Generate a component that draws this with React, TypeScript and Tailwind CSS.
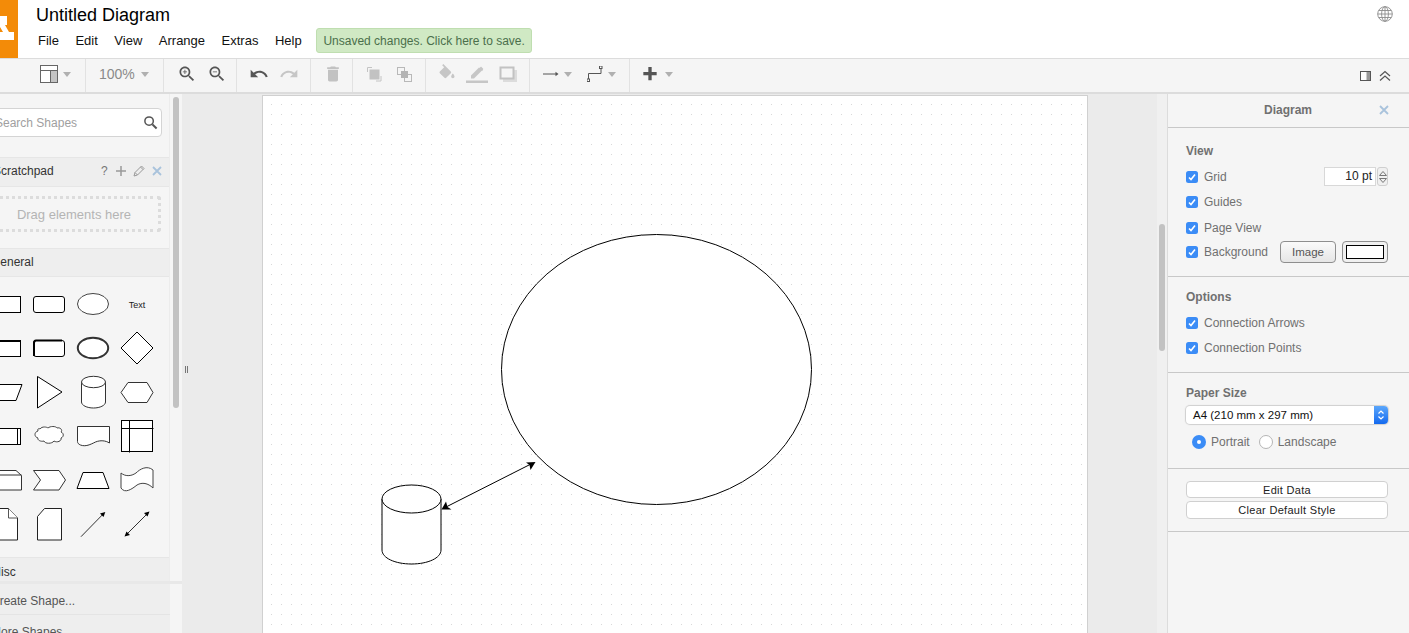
import type { ReactNode } from 'react'

const font = "font-['Liberation_Sans',Arial,sans-serif]"

const menus = ['File', 'Edit', 'View', 'Arrange', 'Extras', 'Help']

function Mat({ d, fill = '#555', className = '' }: { d: string; fill?: string; className?: string }) {
  return (
    <svg viewBox="0 0 24 24" className={`w-5 h-5 flex-shrink-0 ${className}`} fill={fill}>
      <path d={d} />
    </svg>
  )
}

function Caret({ className = '' }: { className?: string }) {
  return (
    <svg viewBox="0 0 8 5" className={`w-2 h-[5px] flex-shrink-0 ${className}`} fill="#b0b0b0">
      <path d="M0 0h8L4 5z" />
    </svg>
  )
}

function Group({ className, children }: { className: string; children: ReactNode }) {
  return <div className={`flex items-center h-full pb-[3px] border-r border-[#e2e2e2] flex-shrink-0 ${className}`}>{children}</div>
}

const zoomGlass = 'M15.5 14h-.79l-.28-.27C15.41 12.59 16 11.11 16 9.5 16 5.91 13.09 3 9.5 3S3 5.91 3 9.5 5.91 16 9.5 16c1.61 0 3.09-.59 4.23-1.57l.27.28v.79l5 4.99L20.49 19l-4.99-5zm-6 0C7.01 14 5 11.99 5 9.5S7.01 5 9.5 5 14 7.01 14 9.5 11.99 14 9.5 14z'

function Toolbar() {
  return (
    <div className="flex items-center h-[35px] bg-[#f5f5f5] border-b-2 border-[#dcdcdc]">
      <Group className="w-[86px] pl-[40px]">
        <svg viewBox="0 0 18 18" className="w-[18px] h-[18px]">
          <rect x="0.5" y="0.5" width="17" height="17" fill="#fff" stroke="#666" />
          <rect x="11" y="6" width="6" height="11" fill="#c4c4c4" />
          <path d="M1 5.5h16M10.5 6v11" stroke="#666" fill="none" />
        </svg>
        <Caret className="ml-[5px]" />
      </Group>
      <Group className="w-[78px] pl-[13px] text-[14px] text-[#8a8a8a]">
        <span className="w-[42px]">100%</span>
        <Caret />
      </Group>
      <Group className="w-[73px] pl-[13px] gap-[10px]">
        <Mat d={`${zoomGlass}M12 10h-2v2H9v-2H7V9h2V7h1v2h2v1z`} />
        <Mat d={`${zoomGlass}M7 9h5v1H7z`} />
      </Group>
      <Group className="w-[74px] pl-[12px] gap-[10px]">
        <Mat d="M12.5 8c-2.65 0-5.05.99-6.9 2.6L2 7v9h9l-3.62-3.62c1.39-1.16 3.16-1.88 5.12-1.88 3.54 0 6.55 2.31 7.6 5.5l2.37-.78C21.08 11.03 17.15 8 12.5 8z" />
        <Mat fill="#c6c6c6" d="M18.4 10.6C16.55 8.99 14.15 8 11.5 8c-4.65 0-8.58 3.03-9.96 7.22L3.9 16c1.05-3.19 4.05-5.5 7.6-5.5 1.95 0 3.73.72 5.12 1.88L13 16h9V7l-3.6 3.6z" />
      </Group>
      <Group className="w-[42px] pl-[12px]">
        <Mat fill="#c2c2c2" d="M6 19c0 1.1.9 2 2 2h8c1.1 0 2-.9 2-2V7H6v12zM19 4h-3.5l-1-1h-5l-1 1H5v2h14V4z" />
      </Group>
      <Group className="w-[73px] pl-[11px] gap-[10px]">
        <svg viewBox="0 0 20 20" className="w-5 h-5">
          <path d="M3.500 8V3.500H8M12 17h5v-5" fill="none" stroke="#c4c4c4" />
          <rect x="5.500" y="5.500" width="10" height="10" fill="#c2c2c2" />
        </svg>
        <svg viewBox="0 0 20 20" className="w-5 h-5">
          <rect x="3.500" y="3.500" width="7" height="7" fill="none" stroke="#b8b8b8" />
          <rect x="10.500" y="10.500" width="7" height="7" fill="none" stroke="#b8b8b8" />
          <rect x="7" y="7" width="7" height="7" fill="#b4b4b4" />
        </svg>
      </Group>
      <Group className="w-[104px] pl-[11px] gap-[10px]">
        <Mat fill="#c6c6c6" d="M16.56 8.94L7.62 0 6.21 1.41l2.38 2.38-5.15 5.15c-.59.59-.59 1.54 0 2.12l5.500 5.500c.29.29.68.44 1.06.44s.77-.15 1.06-.44l5.500-5.500c.59-.58.59-1.53 0-2.12zM19 11.500s-2 2.170-2 3.500c0 1.100.9 2 2 2s2-.9 2-2c0-1.330-2-3.500-2-3.500z" />
        <svg viewBox="0 0 22 22" className="w-[22px] h-[22px] -mx-[1px]" fill="#c6c6c6">
          <path d="M5 12.500V15.500h3l8-8L13 4.500zM17 6.500c.3-.3.3-.7 0-1L15.500 4c-.3-.3-.7-.3-1 0l-1 1 3 3z" />
          <rect x="0" y="17.500" width="22" height="2.500" />
        </svg>
        <svg viewBox="0 0 20 20" className="w-5 h-5 ml-[1px]">
          <rect x="5" y="6" width="14" height="12" fill="#dcdcdc" />
          <rect x="2.500" y="3.500" width="13" height="11" fill="#f5f5f5" stroke="#c2c2c2" strokeWidth="2" />
        </svg>
      </Group>
      <Group className="w-[100px] pl-[13px]">
        <svg viewBox="0 0 16 8" className="w-4 h-2">
          <path d="M0 4h13" stroke="#555" fill="none" />
          <path d="M12.500 1.800L15.500 4l-3 2.200z" fill="#555" />
        </svg>
        <Caret className="ml-[5px]" />
        <svg viewBox="0 0 16 16" className="w-4 h-4 ml-[15px]">
          <path d="M1.500 13V7.500h12.500V2" fill="none" stroke="#555" />
          <rect x="0" y="13" width="2.500" height="2.500" fill="#fff" stroke="#555" />
          <rect x="12.500" y="0" width="2.500" height="2.500" fill="#fff" stroke="#555" />
        </svg>
        <Caret className="ml-[5px]" />
      </Group>
      <div className="flex items-center h-full pb-[3px] pl-[10px]">
        <Mat d="M20 13.500h-6v6h-4v-6H4v-4h6v-6h4v6h6z" />
        <Caret className="ml-[5px]" />
      </div>
      <div className="ml-auto flex items-center gap-[7px] pr-[18px]">
        <svg viewBox="0 0 12 12" className="w-3 h-3">
          <rect x="0.500" y="1.500" width="10" height="9" fill="#fff" stroke="#555" />
          <rect x="6.500" y="2" width="3.500" height="8" fill="#999" />
        </svg>
        <svg viewBox="0 0 12 12" className="w-3 h-3" fill="none" stroke="#555" strokeWidth="1.200">
          <path d="M1 6l5-4.500L11 6M1 10.500L6 6l5 4.500" />
        </svg>
      </div>
    </div>
  )
}

function Header() {
  return (
    <header className="flex h-[59px] bg-white border-b border-[#dcdcdc]">
      <div className="w-[18px] bg-[#f38b08] flex-shrink-0">
        <svg viewBox="0 0 18 58" className="w-[18px] h-[58px]" fill="#fff">
          <path d="M0 16h7v9H5l4 7h5v8H0v-8h3l-3-5z" />
        </svg>
      </div>
      <div className="pl-[18px] flex-1">
        <div className="text-[18px] leading-[21px] mt-[5px] text-black">Untitled Diagram</div>
        <div className="flex items-center mt-[2px]">
          <nav className="flex text-[13px] gap-[16.5px] pl-[2px] text-[#111]">
            {menus.map((m) => <span key={m}>{m}</span>)}
          </nav>
          <div className="ml-[14.5px] h-[25px] w-[216px] flex items-center justify-center rounded-[3px] border border-[#bfdeb0] bg-[#d0e9c4] text-[12px] text-[#4b6f4b] whitespace-nowrap">
            Unsaved changes. Click here to save.
          </div>
        </div>
      </div>
      <svg viewBox="0 0 16 16" className="w-4 h-4 mt-[6px] mr-[16px]" fill="none" stroke="#8c8c8c" strokeWidth="0.900">
        <circle cx="8" cy="8" r="7.300" />
        <ellipse cx="8" cy="8" rx="3.400" ry="7.300" />
        <path d="M8 .7v14.600M.7 8h14.600M1.800 4.500h12.400M1.800 11.500h12.400" />
      </svg>
    </header>
  )
}

const stroke = { fill: '#fff', stroke: '#000', strokeWidth: 1 }

// palette cells: 44x44, shapes 32 wide around the centre
const shapes: ReactNode[] = [
  <rect x="6.500" y="14.500" width="31" height="16" {...stroke} />,
  <rect x="6.500" y="14.500" width="31" height="16" rx="2.500" {...stroke} />,
  <ellipse cx="22" cy="22" rx="15.500" ry="10.500" {...stroke} stroke="#444" />,
  <text x="22" y="26" textAnchor="middle" fontSize="9" fill="#222">Text</text>,

  <g><rect x="6.500" y="14.500" width="31" height="16" {...stroke} /><path d="M6.500 15h31" stroke="#000" strokeWidth="2" /></g>,
  <g>
    <rect x="6.500" y="14.500" width="31" height="16" rx="2.500" {...stroke} />
    <path d="M7 30V17c0-2 1-2.500 2-2.500h26" fill="none" stroke="#000" strokeWidth="2" />
  </g>,
  <ellipse cx="22" cy="22" rx="15.200" ry="10.200" {...stroke} stroke="#333" strokeWidth={2} />,
  <path d="M22 6l16 16-16 16L6 22z" {...stroke} />,

  <path d="M9 14.500h30L33 30.500H3z" {...stroke} />,
  <path d="M10.500 6.500l24.500 15.500-24.500 16z" {...stroke} />,
  <g>
    <path d="M10.500 12v20c0 3.300 5.400 6 12 6s12-2.700 12-6V12" {...stroke} stroke="#333" />
    <ellipse cx="22.500" cy="12" rx="12" ry="5.700" {...stroke} stroke="#333" />
  </g>,
  <path d="M13 12.500h19L38 22.500l-6 10H13l-7-10z" {...stroke} stroke="#333" />,

  <g><rect x="6.500" y="14.500" width="31" height="16" {...stroke} /><path d="M34.500 14.500v16" stroke="#000" /></g>,
  <path d="M13 15c2-3 7-2 8-1 2-2 8-2 9 0 3-1 6 2 4 4 3 1 3 5 0 6 1 3-4 5-7 3-2 3-9 3-10 0-3 1-7-1-6-3-4-1-4-6 0-7-1-2 1-3 2-2z" {...stroke} stroke="#444" />,
  <path d="M6.500 12.500h32v16.500c-4-2.500-9-3-14-1-5 2.500-10 5-15 3-2-.8-3-2-3-3.500z" {...stroke} stroke="#333" />,
  <g {...stroke}>
    <rect x="6.500" y="6.500" width="31" height="31" />
    <path d="M6.500 14.500h32M14.500 6.500v32" fill="none" />
  </g>,

  <g><path d="M0 12.500h33l5.500 5v14.500H0z" {...stroke} stroke="#333" /><path d="M0 17h38.500" fill="none" stroke="#333" /></g>,
  <path d="M6.500 12.500h25.500l6.500 9.500-6.500 10H6.500l7-10z" {...stroke} stroke="#333" />,
  <path d="M12 14.500h20l6 16H6z" {...stroke} />,
  <path d="M6 15C10 18.500 16 18.500 21 15 25 11 32 7 38 12V30C33 25 27 24 22 27 17 31 10 36 6 30z" {...stroke} stroke="#444" />,

  <g><path d="M0 6.500h25.500l9 9.500v22H0z" {...stroke} stroke="#222" /><path d="M25.500 6.500v9.500h9" {...stroke} stroke="#555" /></g>,
  <path d="M17.500 6.500h17v31.500h-24V14.500z" {...stroke} stroke="#222" />,
  <g><path d="M10 34.700l22-22.500" stroke="#000" fill="none" strokeWidth={0.800} /><path d="M34.300 10l-5.300 1.500 3.500 3.500z" fill="#000" /></g>,
  <g>
    <path d="M11 33l22-22" stroke="#000" fill="none" strokeWidth={0.800} />
    <path d="M34.500 9.500l-5.500 1.500 3.500 3.500zM9.500 34.500l5.500-1.500-3.500-3.500z" fill="#000" />
  </g>,
]

function Section({ children, className = '' }: { children: ReactNode; className?: string }) {
  return <div className={`h-[29px] flex items-center text-[12px] text-[#333] bg-[#eeeeee] border-y border-[#e6e6e6] ${className}`}>{children}</div>
}

function Sidebar() {
  return (
    <aside className="w-[190px] flex-shrink-0 flex bg-[#ebebeb] h-full">
      <div className="w-[182px] flex flex-col bg-[#f5f5f5] overflow-hidden">
        <div className="flex h-[487px] flex-shrink-0 overflow-hidden">
          <div className="w-[170px] flex-shrink-0 overflow-hidden border-r border-[#ececec]">
            <div className="w-[197px] -ml-[27px]">
              <div className="h-[63px] pt-[14px] pl-[14px] pr-[8px]">
                <div className="h-[29px] w-[175px] bg-white border border-[#d4d4d4] rounded-[4px] flex items-center justify-between pl-[7px] pr-[3px] text-[12px] text-[#a0a0a0]">
                  <span>Search Shapes</span>
                  <svg viewBox="0 0 16 16" className="w-[15px] h-[15px]" fill="none" stroke="#555" strokeWidth="1.600">
                    <circle cx="6.500" cy="6.500" r="4.500" />
                    <path d="M10 10l4.500 4.500" strokeWidth="2.200" />
                  </svg>
                </div>
              </div>
              <Section className="justify-between pl-[20px] pr-[8px] pb-[2px] h-[30px]">
                <span>Scratchpad</span>
                <span className="flex items-center gap-[6px] text-[#777]">
                  <span className="text-[12px] w-[8px]">?</span>
                  <svg viewBox="0 0 12 12" className="w-3 h-3" stroke="#999" strokeWidth="1.500"><path d="M6 1v10M1 6h10" /></svg>
                  <svg viewBox="0 0 12 12" className="w-3 h-3" fill="none" stroke="#999"><path d="M1 11l1-3.500L8.500 1 11 3.500 4.500 10zM7.500 2l2.500 2.500M2 7.500L4.500 10" /></svg>
                  <svg viewBox="0 0 10 10" className="w-[10px] h-[10px] ml-[1px]" stroke="#a9c3dc" strokeWidth="1.800"><path d="M1 1l8 8M9 1l-8 8" /></svg>
                </span>
              </Section>
              <div className="h-[61px] pt-[9px] pl-[14px]">
                <div className="h-[36px] w-[174px] pt-[1px] border-[3px] border-dotted border-[#dcdcdc] rounded-[3px] flex items-center justify-center text-[13px] text-[#b4b4b4]">
                  Drag elements here
                </div>
              </div>
              <Section className="pl-[18px] pb-[2px]">General</Section>
              <div className="grid grid-cols-[repeat(4,44px)] pt-[5px] pl-[10px] pb-[11px]">
                {shapes.map((s, i) => (
                  <svg key={i} viewBox="0 0 44 44" className="w-11 h-11">{s}</svg>
                ))}
              </div>
              <Section className="pl-[18px]">Misc</Section>
            </div>
          </div>
          <div className="w-[11px] flex-shrink-0 pl-[3px] pt-[3px]">
            <div className="w-[6px] h-[311px] rounded-[3px] bg-[#c2c2c2]" />
          </div>
        </div>
        <div className="flex-shrink-0 border-t-[3px] border-[#e8e8e8]">
          <div className="w-[197px] -ml-[27px]">
            <div className="h-[31px] pl-[18px] pt-[3px] flex items-center text-[12px] text-[#555] bg-[#eeeeee] border-b border-[#e4e4e4]">Create Shape...</div>
            <div className="h-[31px] pl-[18px] pt-[3px] flex items-center text-[12px] text-[#555] bg-[#eeeeee]">More Shapes</div>
          </div>
        </div>
      </div>
      <div className="w-2 h-full flex items-center justify-center">
        <div className="w-[3px] h-[7px] border-x border-[#777] translate-y-[6px]" />
      </div>
    </aside>
  )
}

function Canvas() {
  return (
    <main className="flex-1 flex overflow-hidden bg-[#ebebeb] h-full">
      <div className="flex-1 pl-[72px] pt-[1px] overflow-hidden">
        <div className="w-[826px] h-full bg-white border-x border-t border-[#d0d0d0]">
          <svg width="824" height="538" className="block">
            <defs>
              <pattern id="dots" x="8" y="8" width="10" height="10" patternUnits="userSpaceOnUse">
                <rect width="1" height="1" fill="#d8d8d8" />
              </pattern>
            </defs>
            <rect width="824" height="538" fill="url(#dots)" />
            <g transform="translate(-263 -96)" fill="#fff" stroke="#000" strokeWidth="1">
              <ellipse cx="656.500" cy="369.500" rx="155" ry="135" />
              <path d="M382 499v51c0 8 13 14 29.500 14s29.500-6 29.500-14v-51" />
              <ellipse cx="411.500" cy="499" rx="29.500" ry="14" />
              <path d="M447 506.500l83-42" fill="none" />
              <path d="M441.500 509.500l4.500-8 1.500 5.500 4 2.500z" fill="#000" stroke="none" />
              <path d="M535.500 462l-9.500.5 3.500 2.500 1 5z" fill="#000" stroke="none" />
            </g>
          </svg>
        </div>
      </div>
      <div className="w-[10px] flex-shrink-0 bg-[#f0f0f0] pl-[2px] pt-[130px]">
        <div className="w-[6px] h-[127px] rounded-[3px] bg-[#c2c2c2]" />
      </div>
    </main>
  )
}

function Check({ label, className = '' }: { label: string; className?: string }) {
  return (
    <label className={`flex items-center gap-[6px] h-[14px] leading-[14px] text-[12px] text-[#707070] ${className}`}>
      <span className="w-3 h-3 rounded-[2.500px] bg-[#3b8cf6] flex items-center justify-center">
        <svg viewBox="0 0 12 12" className="w-3 h-3" fill="none" stroke="#fff" strokeWidth="1.600"><path d="M3 6.500l2 2 4-5" /></svg>
      </span>
      {label}
    </label>
  )
}

function Heading({ children }: { children: ReactNode }) {
  return <div className="text-[12px] font-bold text-[#707070] leading-[14px]">{children}</div>
}

function Panel() {
  return (
    <aside className="w-[242px] flex-shrink-0 h-full bg-[#f5f5f5] border-l border-[#dcdcdc]">
      <div className="h-[34px] relative flex items-center justify-center border-b border-[#c8c8c8] text-[12px] font-bold text-[#707070] pr-[1px] pb-[2px]">
        Diagram
        <svg viewBox="0 0 10 10" className="absolute right-[20px] top-[11px] w-[10px] h-[10px]" stroke="#a9c3dc" strokeWidth="1.800"><path d="M1 1l8 8M9 1l-8 8" /></svg>
      </div>
      <div className="h-[149px] border-b border-[#c8c8c8] pl-[18px] pr-[21px] pt-[16px]">
        <Heading>View</Heading>
        <div className="flex items-center justify-between h-[19px] mt-[9px]">
          <Check label="Grid" />
          <div className="flex items-center gap-[1px]">
            <div className="w-[52px] h-[19px] bg-white border border-[#d8d8d8] text-[12px] text-[#222] text-right pr-[3px] leading-[17px]">10 pt</div>
            <div className="w-[11px] h-[19px] rounded-[3px] bg-[#f0f0f0] border border-[#cfcfcf] flex flex-col items-center justify-center gap-[2px]">
              <svg viewBox="0 0 8 5" className="w-2 h-[5px]" fill="none" stroke="#777"><path d="M.5 4.500L4 .5l3.500 4z" /></svg>
              <svg viewBox="0 0 8 5" className="w-2 h-[5px]" fill="none" stroke="#777"><path d="M.5.5l3.500 4 3.500-4z" /></svg>
            </div>
          </div>
        </div>
        <Check label="Guides" className="mt-[9px]" />
        <Check label="Page View" className="mt-[12px]" />
        <div className="flex items-center mt-[6px]">
          <Check label="Background" className="w-[94px]" />
          <div className="w-[56px] h-[22px] pt-[1px] rounded-[4px] border border-[#8e8e8e] bg-gradient-to-b from-[#fafafa] to-[#e6e6e6] flex items-center justify-center text-[11.500px] text-[#555]">Image</div>
          <div className="w-[46px] h-[22px] ml-[6px] rounded-[4px] border border-[#8e8e8e] bg-[#f0f0f0] flex items-center justify-center">
            <div className="w-[38px] h-[14px] bg-white border border-black" />
          </div>
        </div>
      </div>
      <div className="h-[96px] border-b border-[#c8c8c8] pl-[18px] pt-[13px]">
        <Heading>Options</Heading>
        <Check label="Connection Arrows" className="mt-[12px]" />
        <Check label="Connection Points" className="mt-[11px]" />
      </div>
      <div className="h-[96px] border-b border-[#c8c8c8] pl-[18px] pr-[21px] pt-[13px]">
        <Heading>Paper Size</Heading>
        <div className="mt-[6px] h-[18px] flex rounded-[4px] bg-white shadow-[0_0_1px_1px_#cfcfcf] overflow-hidden">
          <div className="flex-1 pl-[7px] text-[11.500px] leading-[18px] text-[#111]">A4 (210 mm x 297 mm)</div>
          <div className="w-[14px] bg-gradient-to-b from-[#5aa6fb] to-[#1269ee] flex items-center justify-center">
            <svg viewBox="0 0 8 12" className="w-2 h-3" fill="none" stroke="#fff" strokeWidth="1.200"><path d="M1.500 4.500L4 2l2.500 2.500M1.500 7.500L4 10l2.500-2.500" /></svg>
          </div>
        </div>
        <div className="flex items-center mt-[10px] pl-[6px] h-[16px] text-[12px] text-[#707070]">
          <span className="w-[14px] h-[14px] rounded-full bg-[#3b8cf6] flex items-center justify-center">
            <span className="w-1 h-1 rounded-full bg-white" />
          </span>
          <span className="ml-[5px]">Portrait</span>
          <span className="w-[14px] h-[14px] ml-[9px] rounded-full bg-white border border-[#b5b5b5]" />
          <span className="ml-[5px]">Landscape</span>
        </div>
      </div>
      <div className="h-[63px] border-b border-[#c8c8c8] pl-[18px] pr-[21px] pt-[12px] flex flex-col gap-[3px]">
        <div className="h-[17px] rounded-[4px] bg-white border border-[#d0d0d0] text-[11px] leading-[16px] text-center text-[#222] tracking-[0.300px]">Edit Data</div>
        <div className="h-[18px] rounded-[4px] bg-white border border-[#d0d0d0] text-[11px] leading-[16px] text-center text-[#222] tracking-[0.300px]">Clear Default Style</div>
      </div>
    </aside>
  )
}

export default function App() {
  return (
    <div className={`w-[1409px] h-[633px] overflow-hidden flex flex-col bg-white ${font}`}>
      <Header />
      <Toolbar />
      <div className="flex flex-1 min-h-0">
        <Sidebar />
        <Canvas />
        <Panel />
      </div>
    </div>
  )
}
